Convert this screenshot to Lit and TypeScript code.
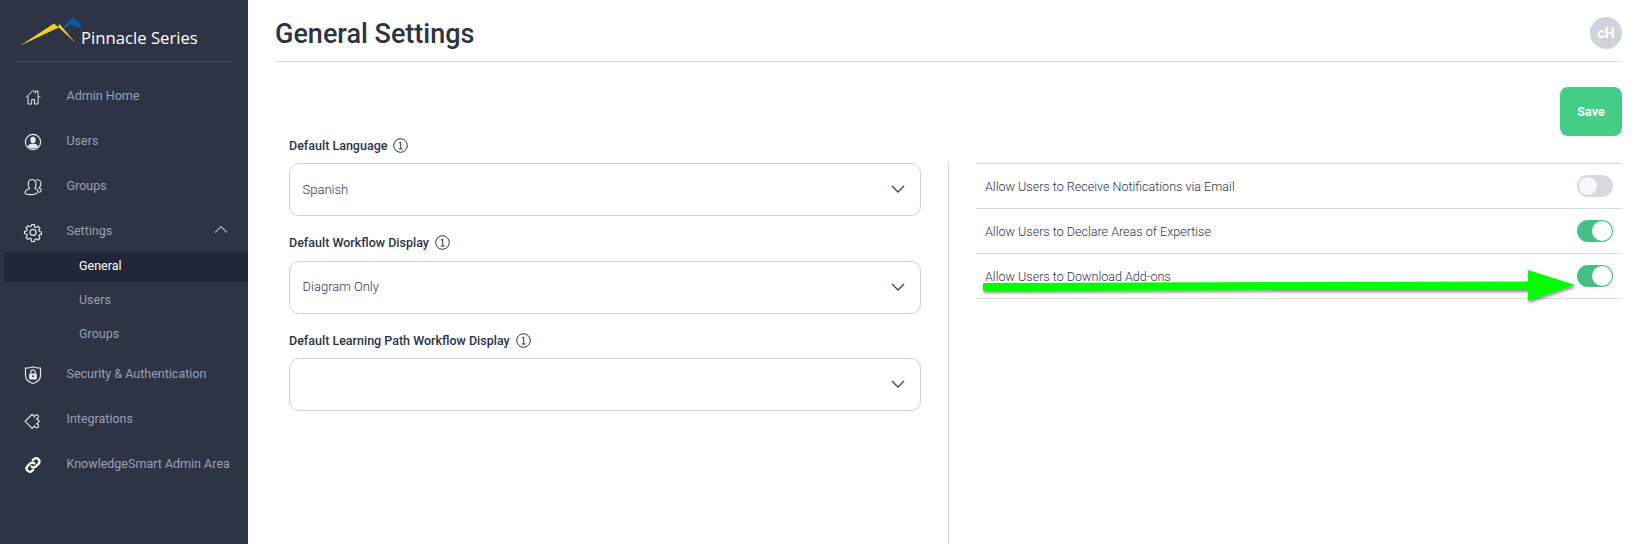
import { LitElement, html, css, svg } from "lit";
import { customElement } from "lit/decorators.js";

const W = "#e6e8ec";
const icons: Record<string, unknown> = {
  home: svg`<path d="M3 10.500 10 3.500l2.500 2.400V4H15v4.400l2.500 2.500M5 9.200V17h3.700v-4.500h2.800V17h3.600V9" fill="none" stroke="${W}" stroke-width="1"/>`,
  user: svg`<circle cx="10" cy="10" r="7.600" fill="none" stroke="${W}" stroke-width="1.200"/><ellipse cx="10" cy="8" rx="2.700" ry="3.200" fill="${W}"/><path d="M4.800 14.300c.7-2 3-2.500 5.200-2.500s4.500.5 5.200 2.500C14 15.800 12 16.500 10 16.500s-4-.7-5.200-2.200z" fill="${W}"/>`,
  group: svg`<path d="M6.500 11.500C4.500 9 4.500 2.500 9 2.500s4.500 6 3 9c3 1 3.500 2.500 2.500 4-1.500 2.500-11.500 3-12.500.5-.5-2 2-3.500 4.500-4.500Z" fill="none" stroke="${W}" stroke-width="1.100"/><path d="M13 3.500C14.500 2 18 3 18 6.500c0 2-1 3.500-2 4.500 1.500.5 2.500 1.500 2 3-.2.8-1 1.200-2 1.500" fill="none" stroke="${W}" stroke-width="1.100"/>`,
  gear: svg`<path d="M8.500 1.800h3l.5 2.500 1.500.7 2.200-1.300 2 2.100-1.300 2.100.6 1.500 2.400.6v2.600l-2.400.6-.6 1.500 1.300 2.100-2 2.100-2.200-1.300-1.500.7-.5 2.400h-3L8 17.600l-1.500-.7-2.200 1.300-2-2.100 1.300-2.100-.6-1.500-2.400-.6V9.300l2.400-.6.6-1.500-1.300-2.100 2-2.100 2.200 1.300L8 3.300z" transform="translate(1 1) scale(.9)" fill="none" stroke="${W}" stroke-width="1.300" stroke-linejoin="round"/><circle cx="10" cy="10.400" r="3" fill="none" stroke="${W}" stroke-width="1.200"/>`,
  shield: svg`<path d="M10 1.800c2.500 1.200 5 1.400 7.500 1.400v7.300c0 4-3.500 6.700-7.500 8-4-1.300-7.500-4-7.500-8V3.200C5 3.200 7.500 3 10 1.800z" fill="none" stroke="${W}" stroke-width="1.200"/><rect x="6.200" y="8.500" width="7.600" height="6" rx=".8" fill="${W}"/><path d="M7.800 8.600V7a2.200 2.200 0 0 1 4.400 0v1.600" fill="none" stroke="${W}" stroke-width="1.200"/><circle cx="10" cy="11.300" r="1" fill="#2d3446"/>`,
  puzzle: svg`<g transform="translate(9.500 11) rotate(45)"><path d="M-5 -4.500H-1.500a2 2 0 1 1 3 0H5V-1a2 2 0 1 1 0 3V5.500H-5Z" fill="none" stroke="${W}" stroke-width="1.100"/></g>`,
  link: svg`<path d="M8.500 11.500a3 3 0 0 0 4.300 0l3-3a3.300 3.300 0 0 0-4.600-4.600L9.800 5.200" fill="none" stroke="#fff" stroke-width="2.300" stroke-linecap="round"/><path d="M11.500 8.500a3 3 0 0 0-4.300 0l-3 3a3.300 3.300 0 0 0 4.600 4.600l1.400-1.300" fill="none" stroke="#fff" stroke-width="2.300" stroke-linecap="round"/>`,
};

@customElement("app-root")
export class AppRoot extends LitElement {
  static styles = css`
    :host { display: flex; width: 1646px; height: 544px; overflow: hidden; background: #fff; font-family: Roboto, "Liberation Sans", sans-serif; position: relative; }
    * { box-sizing: border-box; }
    aside { width: 248px; flex: none; background: #2d3446; color: #a3abbb; }
    .brand { margin: 0 17px; height: 62px; border-bottom: 1px solid #454c5e; display: flex; }
    .brand svg { display: block; flex: none; }
    .brand-name { font: 400 16.700px "Open Sans", sans-serif; color: #fff; margin: 26px 0 0 0; line-height: 24px; white-space: nowrap; }
    nav { padding-top: 11px; display: flex; flex-direction: column; }
    .item { height: 45px; display: flex; align-items: center; font-size: 12.500px; font-weight: 400; color: #99a2b4; padding-left: 23px; position: relative; }
    .item svg.ico { width: 20px; height: 20px; margin: 3px 23.500px 0 0; flex: none; }
    .chev { position: absolute; right: 20px; top: 17px; }
    .sub { height: 34.500px; display: flex; align-items: center; padding-left: 79px; font-size: 12.500px; font-weight: 400; color: #99a2b4; }
    .sub.active { background: #1f2739; color: #fff; margin: -1px 0 0 4px; padding: 0 0 4px 75px; height: 30px; }
    main { flex: 1; min-width: 0; padding: 0 24px 0 27px; display: flex; flex-direction: column; }
    header { height: 62px; border-bottom: 1px solid #d9dae0; display: flex; align-items: center; justify-content: space-between; flex: none; }
    h1 { margin: 0; font-size: 27px; font-weight: 500; color: #2b3344; line-height: 32px; padding-top: 7px; }
    .avatar { width: 32px; height: 32px; border-radius: 50%; background: #cfd3db; color: #fff; font-size: 14px; font-weight: 700; display: flex; align-items: center; justify-content: center; margin-top: 4px; }
    .actions { display: flex; justify-content: flex-end; padding-top: 25px; flex: none; height: 100px; }
    .save { width: 62px; height: 49px; border-radius: 8px; background: #44cd86; color: #fff; border: 0; font: 700 12.500px Roboto, sans-serif; padding: 0; }
    .cols { display: flex; flex: 1; min-height: 0; }
    .left { width: 673px; flex: none; padding: 0 0 0 14px; margin-top: -24px; }
    .field { height: 97.500px; width: 646px; display: flex; flex-direction: column; }
    .label { font-size: 12.500px; font-weight: 500; color: #2b3344; height: 20px; display: flex; align-items: center; gap: 6px; margin: -3px 0 8px; }
    .label svg { flex: none; }
    .select { height: 53px; width: 632px; border: 1px solid #ccd0de; border-radius: 10px; display: flex; align-items: center; justify-content: space-between; padding: 0 15px 1px 12.500px; font-size: 13px; font-weight: 300; color: #2f3747; }
    .right { flex: 1; border-left: 1px solid #d9dae0; padding: 1px 0 0 27px; }
    .row { height: 45px; border-top: 1px solid #d9dae0; display: flex; align-items: center; justify-content: space-between; padding: 0 9px; font-size: 12.550px; font-weight: 300; color: #2b3344; }
    .row:last-child { border-bottom: 1px solid #d9dae0; height: 46px; }
    .switch { width: 36px; height: 22px; border-radius: 11px; background: #d7dae0; position: relative; }
    .switch::after { content: ""; position: absolute; top: 2px; left: 2px; width: 18px; height: 18px; border-radius: 50%; background: #f8f8fa; }
    .switch.on { background: #44c084; }
    .switch.on::after { left: 15px; top: 1px; width: 20px; height: 20px; background: #fff; }
    .arrow { position: absolute; left: 0; top: 0; pointer-events: none; }
  `;

  ico(n: string) { return html`<svg class="ico" viewBox="0 0 20 20">${icons[n]}</svg>`; }

  info() {
    return html`<svg width="15" height="15" viewBox="0 0 15 15"><circle cx="7.500" cy="7.500" r="6.800" fill="none" stroke="#2b3344" stroke-width="1"/><path d="M6 5.200 7.700 4v6.800M5.700 11h4" fill="none" stroke="#2b3344" stroke-width="1"/></svg>`;
  }

  field(label: string, value: string) {
    return html`<div class="field">
      <div class="label">${label} ${this.info()}</div>
      <div class="select"><span>${value}</span>
        <svg width="14" height="8" viewBox="0 0 14 8"><path d="M1 1l6 6 6-6" fill="none" stroke="#3c4454" stroke-width="1.300"/></svg>
      </div>
    </div>`;
  }

  row(label: string, on: boolean) {
    return html`<div class="row"><span>${label}</span><div class="switch ${on ? "on" : ""}"></div></div>`;
  }

  render() {
    return html`
      <aside>
        <div class="brand">
          <svg width="64" height="61" viewBox="17 0 64 61">
            <path d="M62.500 28 73 17 85 29 77 27 70 24 65 29Z" fill="#0f5aa6"/>
            <path d="M20 45.700 54 23.500 58 27 59.500 24 76 43.500 60 28.500 58.500 27.500Z" fill="#fdce1c"/>
          </svg>
          <div class="brand-name">Pinnacle Series</div>
        </div>
        <nav>
          <div class="item">${this.ico("home")}Admin Home</div>
          <div class="item">${this.ico("user")}Users</div>
          <div class="item">${this.ico("group")}Groups</div>
          <div class="item">${this.ico("gear")}Settings
            <svg class="chev" width="14" height="9" viewBox="0 0 14 9"><path d="M1 7.500l6-6 6 6" fill="none" stroke="#a3abbb" stroke-width="1.200"/></svg>
          </div>
          <div class="sub active">General</div>
          <div class="sub">Users</div>
          <div class="sub">Groups</div>
          <div class="item">${this.ico("shield")}Security &amp; Authentication</div>
          <div class="item">${this.ico("puzzle")}Integrations</div>
          <div class="item">${this.ico("link")}KnowledgeSmart Admin Area</div>
        </nav>
      </aside>
      <main>
        <header><h1>General Settings</h1><div class="avatar">cH</div></header>
        <div class="actions"><button class="save">Save</button></div>
        <div class="cols">
          <div class="left">
            ${this.field("Default Language", "Spanish")}
            ${this.field("Default Workflow Display", "Diagram Only")}
            ${this.field("Default Learning Path Workflow Display", "")}
          </div>
          <div class="right">
            ${this.row("Allow Users to Receive Notifications via Email", false)}
            ${this.row("Allow Users to Declare Areas of Expertise", true)}
            ${this.row("Allow Users to Download Add-ons", true)}
          </div>
        </div>
      </main>
      <svg class="arrow" width="1646" height="544" viewBox="0 0 1646 544">
        <defs><filter id="s" x="-5%" y="-50%" width="110%" height="220%"><feDropShadow dx="1" dy="2" stdDeviation="1.500" flood-color="#000" flood-opacity=".45"/></filter></defs>
        <path d="M983 283 1290 282 1528 281.500V270L1575 285 1528 301V290L1290 290 983 291Z" fill="#00ff00" filter="url(#s)"/>
      </svg>
    `;
  }
}
